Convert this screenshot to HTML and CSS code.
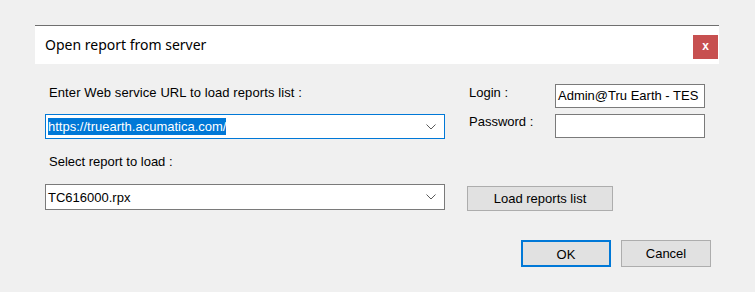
FILE: index.html
```html
<!DOCTYPE html>
<html lang="en">
<head>
    <meta charset="UTF-8">
    <title>Open report from server</title>
    <link rel="stylesheet" href="styles.css">
</head>
<body>

    <div class="dialog">
        <div class="titlebar">
            <span class="title">Open report from server</span>
            <span class="close-btn">x</span>
        </div>

        <div class="form-grid">
            <div class="label url-label">Enter Web service URL to load reports list :</div>
            <div class="label login-label">Login :</div>
            <div class="textbox login-box">Admin@Tru Earth - TES</div>

            <div class="combo combo-focus url-combo">
                <span class="combo-text"><span class="selected">https://truearth.acumatica.com/</span></span>
                <svg class="chevron" width="10" height="6" viewBox="0 0 10 6"><polyline points="0.5,0.5 5,5 9.5,0.5" fill="none" stroke="#5a5a5a" stroke-width="1"/></svg>
            </div>
            <div class="label password-label">Password :</div>
            <div class="textbox password-box"></div>

            <div class="label select-label">Select report to load :</div>

            <div class="combo report-combo">
                <span class="combo-text">TC616000.rpx</span>
                <svg class="chevron" width="10" height="6" viewBox="0 0 10 6"><polyline points="0.5,0.5 5,5 9.5,0.5" fill="none" stroke="#5a5a5a" stroke-width="1"/></svg>
            </div>
            <div class="button load-btn">Load reports list</div>
        </div>

        <div class="actions">
            <div class="button default-btn">OK</div>
            <div class="button">Cancel</div>
        </div>
    </div>

</body>
</html>
```

FILE: styles.css
```css
body {
    margin: 0;
    padding: 0;
    background-color: #f0f0f0;
    font-family: "Liberation Sans", Arial, sans-serif;
    font-size: 13px;
    color: #000;
}

.dialog {
    width: 684px;
    margin: 25px 0 0 35px;
}

.titlebar {
    display: flex;
    justify-content: space-between;
    align-items: flex-start;
    height: 38px;
    background-color: #fff;
    border-top: 1px solid #6f6f6f;
}

.title {
    font-family: "Noto Sans", "Open Sans", sans-serif;
    font-size: 14px;
    line-height: 20px;
    padding: 9px 0 0 10px;
}

.close-btn {
    width: 25px;
    height: 24px;
    margin: 9px 1px 0 0;
    background-color: #c75050;
    color: #fff;
    font-weight: bold;
    font-size: 12px;
    line-height: 22px;
    text-align: center;
}

.form-grid {
    display: grid;
    grid-template-columns: 400px 22px 88px 150px;
    grid-template-rows: 24px 25px 33px 26px;
    row-gap: 6px;
    padding: 20px 0 0 10px;
}

.label {
    line-height: 16px;
    align-self: start;
}

.url-label {
    grid-column: 1;
    grid-row: 1;
    margin-top: 1px;
    padding-left: 4px;
    letter-spacing: 0.1px;
}

.login-label {
    grid-column: 3;
    grid-row: 1;
    margin-top: 1px;
    padding-left: 2px;
}

.password-label {
    grid-column: 3;
    grid-row: 2;
    padding-left: 2px;
}

.select-label {
    grid-column: 1;
    grid-row: 3;
    align-self: center;
    padding-left: 4px;
}

.textbox {
    box-sizing: border-box;
    background-color: #fff;
    border: 1px solid #7a7a7a;
    padding: 0 2px;
    line-height: 22px;
    white-space: nowrap;
    overflow: hidden;
}

.login-box {
    grid-column: 4;
    grid-row: 1;
}

.password-box {
    grid-column: 4;
    grid-row: 2;
    height: 24px;
}

.combo {
    box-sizing: border-box;
    display: flex;
    align-items: center;
    justify-content: space-between;
    background-color: #fff;
    border: 1px solid #7a7a7a;
    padding: 0 8px 0 2px;
    grid-column: 1;
}

.combo-focus {
    border-color: #0078d7;
}

.url-combo {
    grid-row: 2;
}

.report-combo {
    grid-row: 4;
}

.combo-text {
    line-height: 17px;
}

.selected {
    background-color: #0078d7;
    color: #fff;
    padding: 1px 0;
}

.chevron {
    display: block;
}

.button {
    box-sizing: border-box;
    background-color: #e1e1e1;
    border: 1px solid #adadad;
    text-align: center;
    line-height: 23px;
}

.load-btn {
    grid-column: 3 / 5;
    grid-row: 4;
    width: 146px;
    height: 25px;
    margin-top: 2px;
}

.actions {
    display: flex;
    justify-content: flex-end;
    gap: 10px;
    margin-top: 30px;
    padding-right: 8px;
}

.actions .button {
    width: 90px;
    height: 27px;
    line-height: 25px;
}

.default-btn {
    border: 2px solid #0078d7;
    line-height: 23px;
}
```
